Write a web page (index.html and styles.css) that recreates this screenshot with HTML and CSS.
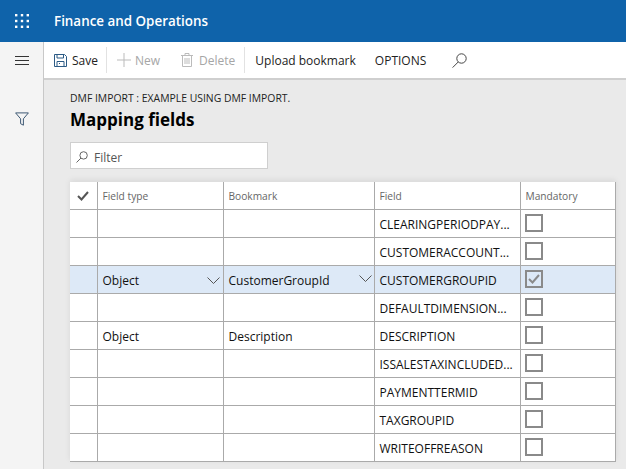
FILE: index.html
```html
<!DOCTYPE html>
<html lang="en">
	<head>
		<meta charset="utf-8">
		<title>Mapping fields</title>
		<link rel="stylesheet" href="styles.css">
	</head>
	<body>
		<!-- top bar -->
		<header class="topbar">
			<svg class="waffle" width="14" height="14" viewBox="0 0 14 14" fill="#fff">
				<rect x="0" y="0" width="2.4" height="2.4"/><rect x="5.8" y="0" width="2.4" height="2.4"/><rect x="11.6" y="0" width="2.4" height="2.4"/>
				<rect x="0" y="5.8" width="2.4" height="2.4"/><rect x="5.8" y="5.8" width="2.4" height="2.4"/><rect x="11.6" y="5.8" width="2.4" height="2.4"/>
				<rect x="0" y="11.6" width="2.4" height="2.4"/><rect x="5.8" y="11.6" width="2.4" height="2.4"/><rect x="11.6" y="11.6" width="2.4" height="2.4"/>
			</svg>
			<span class="app-name">Finance and Operations</span>
		</header>

		<div class="shell">
			<!-- left rail -->
			<nav class="rail">
				<svg class="rail-icon" width="14" height="9" viewBox="0 0 14 9" stroke="#333" fill="none">
					<path d="M0 .5h14M0 4.5h14M0 8.5h14"/>
				</svg>
				<svg class="rail-icon filter-icon" width="14" height="14" viewBox="0 0 14 14" stroke="#3f5a75" fill="none">
					<path d="M.6.9h12.8L8.4 6.8v6.4L5.6 11.7V6.8z"/>
				</svg>
			</nav>

			<div class="workspace">
				<!-- action bar -->
				<div class="actions">
					<button class="action save">
						<svg width="13" height="13" viewBox="0 0 13 13" fill="none" stroke="#2b5a85">
							<path d="M.5.5h10l2 2v10H.5z"/>
							<path d="M3 .5v3.5h6.5V.5M3 12.5V7.5h7v5M5 9.5h1"/>
						</svg>
						Save
					</button>
					<span class="divider"></span>
					<button class="action muted new">
						<svg width="14" height="14" viewBox="0 0 14 14" stroke="#bbb" fill="none">
							<path d="M7 0v14M0 7h14"/>
						</svg>
						New
					</button>
					<button class="action muted bin">
						<svg width="12" height="14" viewBox="0 0 12 14" stroke="#bbb" fill="none">
							<path d="M0 2.5h12M4 2.5V.5h4v2M1.5 2.5v11h9v-11M4 5v6M6 5v6M8 5v6"/>
						</svg>
						Delete
					</button>
					<span class="divider"></span>
					<button class="action upload">Upload bookmark</button>
					<button class="action">OPTIONS</button>
					<svg class="search-icon" width="15" height="15" viewBox="0 0 15 15" stroke="#444" fill="none">
						<circle cx="9.5" cy="5.5" r="4.7"/>
						<path d="M6.2 9 .6 14.6"/>
					</svg>
				</div>

				<main class="content">
					<p class="crumb">DMF IMPORT : EXAMPLE USING DMF IMPORT.</p>
					<h1>Mapping fields</h1>
					<div class="filter">
						<svg width="12" height="12" viewBox="0 0 12 12" stroke="#666" fill="none">
							<circle cx="7.6" cy="4.4" r="3.7"/>
							<path d="M5 7 .5 11.5"/>
						</svg>
						<span>Filter</span>
					</div>

					<table class="grid">
						<colgroup>
							<col class="col-mark"><col class="col-type"><col class="col-bookmark"><col class="col-field"><col class="col-mandatory">
						</colgroup>
						<tr class="head">
							<th class="mark">
								<svg width="12" height="10" viewBox="0 0 12 10" stroke="#555" stroke-width="2" fill="none"><path d="M1 5l3.5 3.5L11 1"/></svg>
							</th>
							<th>Field type</th>
							<th>Bookmark</th>
							<th>Field</th>
							<th>Mandatory</th>
						</tr>
						<tr><td></td><td></td><td></td><td>CLEARINGPERIODPAY...</td><td><span class="check"></span></td></tr>
						<tr><td></td><td></td><td></td><td>CUSTOMERACCOUNT...</td><td><span class="check"></span></td></tr>
						<tr class="selected">
							<td></td>
							<td><div class="combo">Object<svg width="13" height="7" viewBox="0 0 13 7" stroke="#555" fill="none"><path d="M.5.5l6 6 6-6"/></svg></div></td>
							<td><div class="combo">CustomerGroupId<svg class="raised" width="13" height="7" viewBox="0 0 13 7" stroke="#555" fill="none"><path d="M.5.5l6 6 6-6"/></svg></div></td>
							<td>CUSTOMERGROUPID</td>
							<td><span class="check">
								<svg width="14" height="12" viewBox="0 0 14 12" stroke="#8a8a8a" stroke-width="2" fill="none"><path d="M2 6l3.5 3.5L12 2"/></svg>
							</span></td>
						</tr>
						<tr><td></td><td></td><td></td><td>DEFAULTDIMENSION...</td><td><span class="check"></span></td></tr>
						<tr><td></td><td>Object</td><td>Description</td><td>DESCRIPTION</td><td><span class="check"></span></td></tr>
						<tr><td></td><td></td><td></td><td>ISSALESTAXINCLUDED...</td><td><span class="check"></span></td></tr>
						<tr><td></td><td></td><td></td><td>PAYMENTTERMID</td><td><span class="check"></span></td></tr>
						<tr><td></td><td></td><td></td><td>TAXGROUPID</td><td><span class="check"></span></td></tr>
						<tr><td></td><td></td><td></td><td>WRITEOFFREASON</td><td><span class="check"></span></td></tr>
					</table>
				</main>
			</div>
		</div>
	</body>
</html>
```

FILE: styles.css
```css
/*
	page frame
*/

html, body {
	height: 100%;
}

body {
	margin: 0;
	overflow: hidden;
	display: flex;
	flex-direction: column;
	font-family: "Open Sans", "Noto Sans", sans-serif;
	font-size: 12px;
	color: #111;
	background-color: #eaeaea;
}

/*
	blue bar
*/

.topbar {
	flex: none;
	height: 42px;
	display: flex;
	align-items: center;
	padding-left: 15px;
	background-color: #0f63aa;
	color: #fff;
}

.app-name {
	margin-left: 25px;
	font-size: 13.4px;
	font-weight: 600;
}

.shell {
	flex: 1;
	display: flex;
	min-height: 0;
}

/*
	left rail
*/

.rail {
	flex: none;
	width: 43px;
	display: flex;
	flex-direction: column;
	align-items: center;
	padding-top: 14px;
	border-right: 1px solid #c8c8c8;
	background-color: #f4f4f4;
}

.filter-icon {
	margin-top: 47px;
}

.workspace {
	flex: 1;
	min-width: 0;
	display: flex;
	flex-direction: column;
}

/*
	action bar
*/

.actions {
	flex: none;
	height: 36px;
	display: flex;
	align-items: center;
	padding-left: 10px;
	border-bottom: 2px solid #cfcfcf;
	background-color: #fff;
}

.action {
	display: flex;
	align-items: center;
	gap: 4px;
	padding: 0;
	margin-right: 20px;
	border: 0;
	background: none;
	font: inherit;
	color: #222;
}

.action.save {
	gap: 5px;
}

.action.new {
	margin-right: 21px;
}

.action.bin {
	gap: 6px;
	margin-right: 21px;
}

.action.upload {
	margin-right: 19px;
}

.action.muted {
	color: #a6a6a6;
}

.divider {
	width: 1px;
	height: 26px;
	margin: 0 10px 0 -12px;
	background-color: #e2e2e2;
}

.search-icon {
	margin-left: 6px;
}

/*
	page body
*/

.content {
	flex: 1;
	padding: 11px 0 0 26px;
}

.crumb {
	margin: 0;
	font-size: 10.4px;
	line-height: 14px;
	color: #222;
}

h1 {
	margin: 3px 0 0;
	font-size: 17px;
	line-height: 24px;
	font-weight: 700;
	color: #000;
}

.filter {
	box-sizing: border-box;
	width: 198px;
	height: 27px;
	margin-top: 10px;
	display: flex;
	align-items: center;
	gap: 6px;
	padding: 3px 0 0 5px;
	border: 1px solid #cfcfcf;
	background-color: #fff;
	color: #555;
}

/*
	mapping grid
*/

.grid {
	margin-top: 13px;
	table-layout: fixed;
	width: 545px;
	border-collapse: collapse;
	background-color: #fff;
	box-shadow: 0 -2px 6px rgba(0, 0, 0, 0.08);
}

.col-mark { width: 27px; }
.col-type { width: 126px; }
.col-bookmark { width: 151px; }
.col-field { width: 146px; }
.col-mandatory { width: 95px; }

.grid th,
.grid td {
	height: 27px;
	padding: 0 5px;
	border: 1px solid #aaa;
	text-align: left;
	white-space: nowrap;
	overflow: hidden;
}

.grid td {
	box-sizing: border-box;
	height: 28px;
	padding-top: 2px;
}

.grid tr:first-child th {
	border-top: 0;
}

.grid th:first-child,
.grid td:first-child {
	border-left: 0;
}

.grid th {
	font-size: 10.2px;
	font-weight: 400;
	color: #666;
}

.grid .mark {
	padding: 0;
	text-align: center;
}

.grid .mark svg {
	display: block;
	margin: 0 auto;
}

.selected td {
	background-color: #dde9f7;
}

.combo {
	display: flex;
	align-items: center;
	justify-content: space-between;
}

.combo svg {
	margin-right: -2px;
}

.combo .raised {
	margin-right: -3px;
	margin-top: -4px;
}

.check {
	display: flex;
	align-items: center;
	justify-content: center;
	width: 14px;
	height: 14px;
	margin-left: -1px;
	border: 2px solid #8a8a8a;
	position: relative;
	top: -2px;
}
```
